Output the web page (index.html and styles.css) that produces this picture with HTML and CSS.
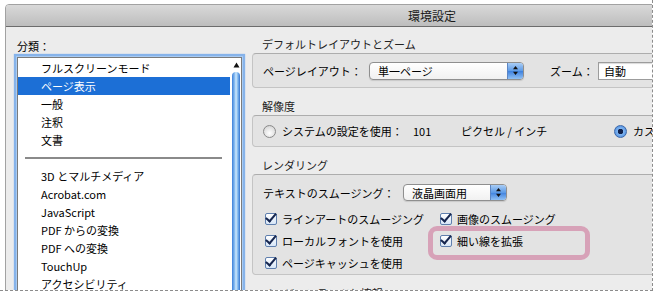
FILE: index.html
```html
<!DOCTYPE html>
<html lang="ja">
<head>
  <meta charset="UTF-8" />
  <title>環境設定</title>
  <link rel="stylesheet" href="styles.css">
</head>
<body>

<div class="frame">
  <div class="window">
    <div class="titlebar">環境設定</div>

    <div class="content">
      <!-- 分類リスト -->
      <aside class="sidebar">
        <div class="sidebar-label">分類：</div>
        <div class="list">
          <ul class="list-items">
            <li>フルスクリーンモード</li>
            <li class="selected">ページ表示</li>
            <li>一般</li>
            <li>注釈</li>
            <li>文書</li>
            <li class="sep"></li>
            <li>3D とマルチメディア</li>
            <li>Acrobat.com</li>
            <li>JavaScript</li>
            <li>PDF からの変換</li>
            <li>PDF への変換</li>
            <li>TouchUp</li>
            <li>アクセシビリティ</li>
          </ul>
          <div class="scrollbar">
            <svg class="scroll-arrow" width="7" height="6" viewBox="0 0 7 6"><path d="M3.5 0.5 L6.5 5.5 L0.5 5.5 Z" fill="#111"/></svg>
            <div class="scroll-thumb"></div>
          </div>
        </div>
      </aside>

      <!-- 設定パネル -->
      <main class="pane">
        <h3 class="group-title">デフォルトレイアウトとズーム</h3>
        <div class="group-box group-row">
          <span class="field-label layout-label">ページレイアウト：</span>
          <div class="popup popup-layout">
            <span>単一ページ</span>
            <span class="stepper">
              <svg width="7" height="11" viewBox="0 0 7 11"><path d="M3.5 1 L6 4.2 L1 4.2 Z M3.5 10 L6 6.8 L1 6.8 Z" fill="#111"/></svg>
            </span>
          </div>
          <span class="field-label zoom-label">ズーム：</span>
          <div class="textfield">自動</div>
        </div>

        <h3 class="group-title">解像度</h3>
        <div class="group-box group-row res-box">
          <span class="radio"></span>
          <span class="res-system">システムの設定を使用：</span>
          <span class="res-value">101</span>
          <span class="res-unit">ピクセル / インチ</span>
          <span class="radio checked"></span>
          <span class="res-custom">カスタム解像度を使用：</span>
        </div>

        <h3 class="group-title">レンダリング</h3>
        <div class="group-box render-box">
          <div class="group-row">
            <span class="field-label smooth-label">テキストのスムージング：</span>
            <div class="popup popup-smooth">
              <span>液晶画面用</span>
              <span class="stepper">
                <svg width="7" height="11" viewBox="0 0 7 11"><path d="M3.5 1 L6 4.2 L1 4.2 Z M3.5 10 L6 6.8 L1 6.8 Z" fill="#111"/></svg>
              </span>
            </div>
          </div>
          <div class="checks">
            <label class="check"><span class="checkbox"></span>ラインアートのスムージング</label>
            <label class="check"><span class="checkbox"></span>画像のスムージング</label>
            <label class="check"><span class="checkbox"></span>ローカルフォントを使用</label>
            <label class="check"><span class="checkbox"></span>細い線を拡張<span class="highlight"></span></label>
            <label class="check"><span class="checkbox"></span>ページキャッシュを使用</label>
          </div>
        </div>

        <h3 class="group-title">ページコンテンツと情報</h3>
        <div class="group-box last-box"></div>
      </main>
    </div>
  </div>
</div>

</body>
</html>
```

FILE: styles.css
```css
* { box-sizing: border-box; }
body {
  margin: 0;
  background: #fff;
  font-family: 'Noto Sans CJK JP', 'Noto Sans', sans-serif;
  font-size: 11px;
  color: #000;
}
.frame {
  width: 653px;
  height: 291px;
  padding: 4px 0 0 5px;
  overflow: hidden;
  border-right: 1px dashed #8c8c8c;
  border-bottom: 1px dashed #8c8c8c;
}
.window {
  width: 854px;
  height: 420px;
  background: #ececec;
  border: 1px solid #a2a2a2;
  border-radius: 4px 4px 0 0;
}
.titlebar {
  height: 22px;
  line-height: 21px;
  text-align: center;
  font-size: 12px;
  color: #1a1a1a;
  background: linear-gradient(#d9d9d9, #bdbdbd);
  border-bottom: 1px solid #6c6c6c;
  border-radius: 3px 3px 0 0;
}
.content {
  display: flex;
}

/* sidebar */
.sidebar {
  width: 246px;
  padding: 11px 0 0 11px;
}
.sidebar-label {
  height: 16px;
  line-height: 16px;
}
.list {
  margin-top: 3px;
  width: 225px;
  height: 260px;
  display: flex;
  background: #fff;
  border: 1px solid #7b7b7b;
  box-shadow: 0 0 0 1px #a9cbf2, 0 0 1px 3px #86b3ea;
}
.list-items {
  flex: 1;
  list-style: none;
  margin: 0;
  padding: 1px 0 0;
}
.list-items li {
  height: 18px;
  line-height: 18px;
  padding-left: 23px;
  white-space: nowrap;
}
.list-items li.selected {
  background: #1c6fd6;
  color: #fff;
}
.list-items li.sep {
  display: flex;
  align-items: center;
  padding: 0 8px 0 7px;
}
.list-items li.sep::after {
  content: '';
  flex: 1;
  height: 2px;
  background: #8a8a8a;
}
.scrollbar {
  width: 11px;
  display: flex;
  flex-direction: column;
  align-items: center;
  padding-top: 4px;
}
.scroll-arrow {
  display: block;
  margin-left: 1px;
}
.scroll-thumb {
  margin-top: 4px;
  width: 8px;
  flex: 1;
  border-radius: 4px 4px 0 0;
  background: linear-gradient(90deg, #3c7fd9, #8fc2f3 35%, #d2e9fc 50%, #86bdf1 70%, #3574d0);
}

/* right pane */
.pane {
  width: 590px;
  padding-top: 9px;
}
.group-title {
  margin: 0 0 1px;
  padding-left: 10px;
  height: 16px;
  line-height: 16px;
  font-size: 11px;
  font-weight: normal;
  color: #222;
}
.group-box {
  background: #e3e3e3;
  border: 1px solid #c4c4c4;
  border-top-color: #adadad;
  border-radius: 4px;
  margin-bottom: 10px;
}
.last-box { height: 40px; }
.group-row {
  display: flex;
  align-items: center;
  white-space: nowrap;
}
.group-box.group-row {
  height: 35px;
  padding: 0 10px;
}
.field-label { display: inline-block; }
.layout-label { width: 106px; }
.zoom-label { width: 48px; margin-left: 26px; }
.smooth-label { width: 140px; }

.popup {
  height: 18px;
  display: flex;
  align-items: center;
  justify-content: space-between;
  padding-left: 8px;
  border: 1px solid #8f8f8f;
  border-radius: 4px;
  background: linear-gradient(#ffffff, #f1f1f1);
  box-shadow: 0 1px 1px rgba(0, 0, 0, 0.12);
  overflow: hidden;
}
.popup-layout { width: 155px; }
.popup-smooth { width: 104px; height: 17px; }
.stepper {
  width: 16px;
  height: 100%;
  display: flex;
  align-items: center;
  justify-content: center;
  border-left: 1px solid #5c86c4;
  background: linear-gradient(#a9cdf6, #5c9ae6 50%, #3d80de 51%, #8fc0f4);
}
.textfield {
  width: 130px;
  height: 18px;
  line-height: 16px;
  padding-left: 5px;
  background: #fff;
  border: 1px solid #9c9c9c;
  box-shadow: inset 0 1px 1px rgba(0, 0, 0, 0.15);
}

/* resolution */
.group-box.res-box { height: 32px; }
.radio {
  width: 13px;
  height: 13px;
  border-radius: 50%;
  border: 1px solid #8a8a8a;
  background: radial-gradient(circle at 50% 65%, #ffffff, #dcdcdc 70%, #bdbdbd);
  margin-right: 6px;
  flex: none;
}
.radio.checked {
  border-color: #3c67a8;
  background: radial-gradient(circle, #10204a 0 2.5px, #7fb4ef 3px, #3d7fdb 100%);
}
.res-system { width: 131px; }
.res-value { width: 48px; }
.res-unit { width: 153px; }

/* rendering */
.render-box {
  padding: 9px 10px 0;
  height: 101px;
}
.checks {
  margin-top: 7px;
  padding-left: 2px;
  display: grid;
  grid-template-columns: 175px auto;
  grid-auto-rows: 22px;
}
.check {
  position: relative;
  display: flex;
  align-items: center;
  white-space: nowrap;
}
.checkbox {
  width: 12px;
  height: 12px;
  margin-right: 5px;
  border: 1px solid #5f7fae;
  border-radius: 2px;
  background: linear-gradient(#ffffff, #d7e6f7);
  position: relative;
}
.checkbox::after {
  content: '';
  position: absolute;
  left: 2px;
  top: -3px;
  width: 4px;
  height: 9px;
  border-right: 2.5px solid #16264f;
  border-bottom: 2.5px solid #16264f;
  transform: rotate(40deg);
}
.highlight {
  position: absolute;
  left: -12px;
  top: -4px;
  width: 162px;
  height: 34px;
  border: 5px solid #d7a2b8;
  border-radius: 9px;
}
```
